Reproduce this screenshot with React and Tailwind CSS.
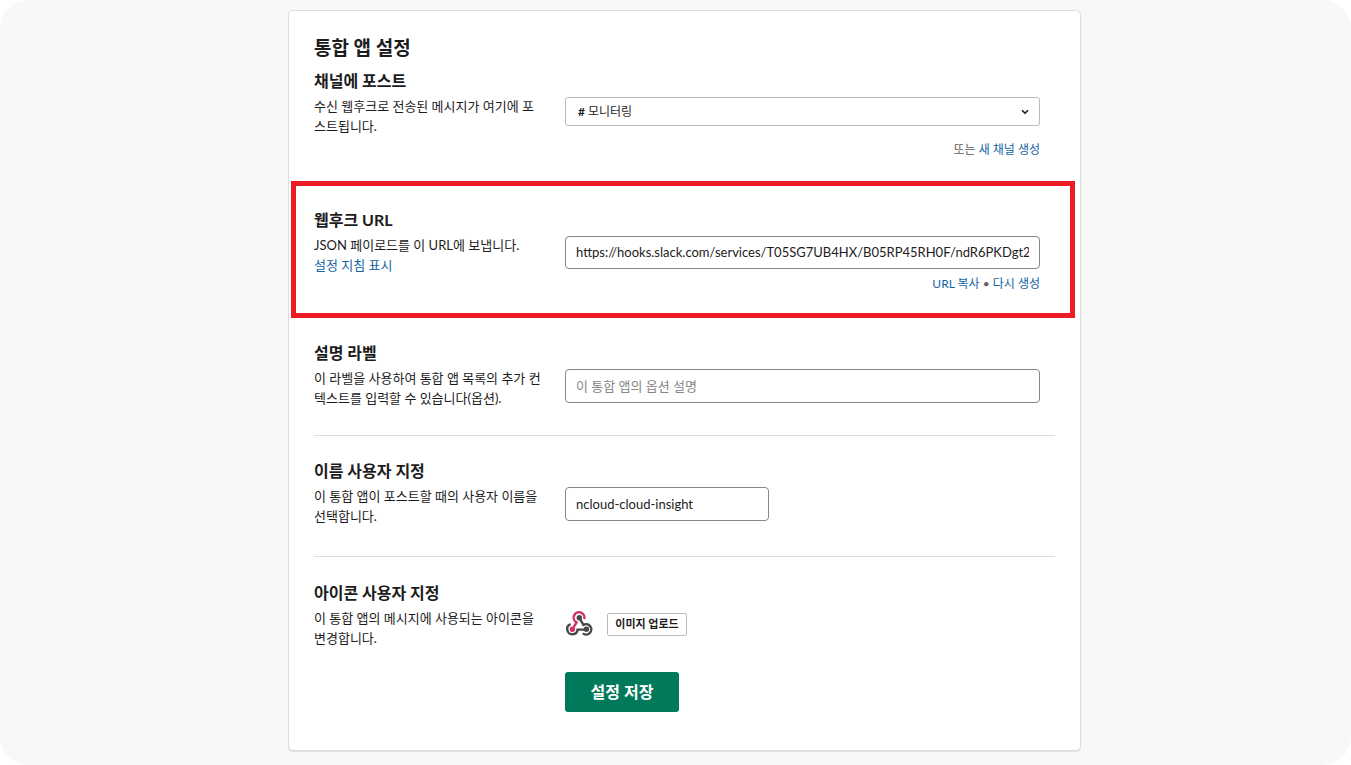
import React, { useState } from 'react';
import { ChevronDown } from 'lucide-react';

const WebhookLogo = () => (
    <svg width="28" height="26" viewBox="0 0 28 26" fill="none" strokeWidth="2.4" aria-hidden="true">
        <path d="M19.2 8.2A5.4 5.4 0 1 0 11.6 11.4L7.4 18.2" stroke="#d03568" />
        <path d="M5.6 13.2A5.2 5.2 0 1 0 12.6 18.6H21.4" stroke="#47474a" />
        <path d="M14.3 6.8L18.4 13.9A5.2 5.2 0 1 1 17.8 22.4" stroke="#47474a" />
        <circle cx="7.4" cy="18.2" r="2.7" fill="#d03568" />
        <circle cx="14.3" cy="6.8" r="2.7" fill="#47474a" />
        <circle cx="21.4" cy="18.2" r="2.7" fill="#47474a" />
    </svg>
);

const SettingRow = ({ title, htmlFor, description, className = '', children }) => (
    <section className={`grid grid-cols-[229px_1fr] gap-x-[22px] ${className}`}>
        <div>
            <h3 className="mb-[3px] text-[16px] leading-6 font-bold">
                <label htmlFor={htmlFor}>{title}</label>
            </h3>
            <div className="text-[13px] leading-5">{description}</div>
        </div>
        <div className="pt-7 pr-[15px]">{children}</div>
    </section>
);

const App = () => {
    const [label, setLabel] = useState('');
    const [username, setUsername] = useState('ncloud-cloud-insight');

    return (
        <div className="bg-white">
            <main className="min-h-screen rounded-[28px] bg-[#f8f8f8] pt-[10px] pb-[14px] pl-[18px] font-['Lato','Noto_Sans_CJK_KR',sans-serif] text-[#1d1c1d]">
                <div className="mx-auto max-w-[793px] rounded-[5px] border border-[#dddddd] bg-white px-[25px] pt-6 pb-[38px] shadow-[0_1px_1px_rgba(0,0,0,0.1)]">
                    <h2 className="mb-2 text-[19px] leading-[26px] font-bold">통합 앱 설정</h2>

                    <SettingRow
                        title="채널에 포스트"
                        htmlFor="channel"
                        description="수신 웹후크로 전송된 메시지가 여기에 포스트됩니다."
                        className="pb-[21px]"
                    >
                        <div className="relative">
                            <span className="pointer-events-none absolute top-0 left-[13px] text-[12px] leading-[29px] font-bold">#</span>
                            <select
                                id="channel"
                                className="block h-[29px] w-full appearance-none rounded-[3px] border border-[#bbbbbb] bg-white pl-[22px] text-[12px]"
                            >
                                <option>모니터링</option>
                            </select>
                            <ChevronDown size={10} strokeWidth={4} className="pointer-events-none absolute top-[10px] right-[10px]" />
                        </div>
                        <p className="mt-[14px] text-right text-[12px] leading-5 text-[#616061]">
                            또는 <a href="#new-channel" className="text-[#1264a3]">새 채널 생성</a>
                        </p>
                    </SettingRow>

                    <div className="-mr-5 -ml-[23px] border-[5px] border-[#ed1c24] pt-[22px] pr-[15px] pb-[19px] pl-[18px]">
                        <SettingRow
                            title="웹후크 URL"
                            htmlFor="webhook-url"
                            description={
                                <>
                                    <p>JSON 페이로드를 이 URL에 보냅니다.</p>
                                    <a href="#guide" className="text-[#1264a3]">설정 지침 표시</a>
                                </>
                            }
                        >
                            <input
                                id="webhook-url"
                                type="text"
                                readOnly
                                value="https://hooks.slack.com/services/T05SG7UB4HX/B05RP45RH0F/ndR6PKDgt28"
                                className="block h-[33px] w-full rounded-[4px] border border-[#868686] bg-white px-[10px] pb-[2px] text-[13px]"
                            />
                            <p className="mt-[5px] text-right text-[12px] leading-5 text-[#616061]">
                                <a href="#copy" className="text-[#1264a3]">URL 복사</a>
                                {' • '}
                                <a href="#regenerate" className="text-[#1264a3]">다시 생성</a>
                            </p>
                        </SettingRow>
                    </div>

                    <SettingRow
                        title="설명 라벨"
                        htmlFor="label"
                        description="이 라벨을 사용하여 통합 앱 목록의 추가 컨텍스트를 입력할 수 있습니다(옵션)."
                        className="border-b border-[#dddddd] pt-[23px] pb-[27px]"
                    >
                        <input
                            id="label"
                            type="text"
                            value={label}
                            onChange={(e) => setLabel(e.target.value)}
                            placeholder="이 통합 앱의 옵션 설명"
                            className="block h-[34px] w-full rounded-[4px] border border-[#868686] bg-white px-[10px] text-[13px] placeholder:text-[#868686]"
                        />
                    </SettingRow>

                    <SettingRow
                        title="이름 사용자 지정"
                        htmlFor="username"
                        description="이 통합 앱이 포스트할 때의 사용자 이름을 선택합니다."
                        className="border-b border-[#dddddd] pt-[23px] pb-[30px]"
                    >
                        <input
                            id="username"
                            type="text"
                            value={username}
                            onChange={(e) => setUsername(e.target.value)}
                            className="block h-[34px] w-[204px] rounded-[4px] border border-[#868686] bg-white px-[10px] text-[13px]"
                        />
                    </SettingRow>

                    <SettingRow
                        title="아이콘 사용자 지정"
                        htmlFor="upload"
                        description="이 통합 앱의 메시지에 사용되는 아이콘을 변경합니다."
                        className="pt-6"
                    >
                        <div className="flex items-center gap-[14px] pt-[2px]">
                            <WebhookLogo />
                            <button
                                id="upload"
                                type="button"
                                className="h-[23px] w-20 rounded-[2px] border border-[#bbbbbb] bg-white text-[11px] font-bold"
                            >
                                이미지 업로드
                            </button>
                        </div>
                        <button
                            type="submit"
                            className="mt-[35px] block h-10 w-[114px] rounded-[3px] bg-[#007a5a] text-[16px] font-bold text-white"
                        >
                            설정 저장
                        </button>
                    </SettingRow>
                </div>
            </main>
        </div>
    );
};

export default App;
